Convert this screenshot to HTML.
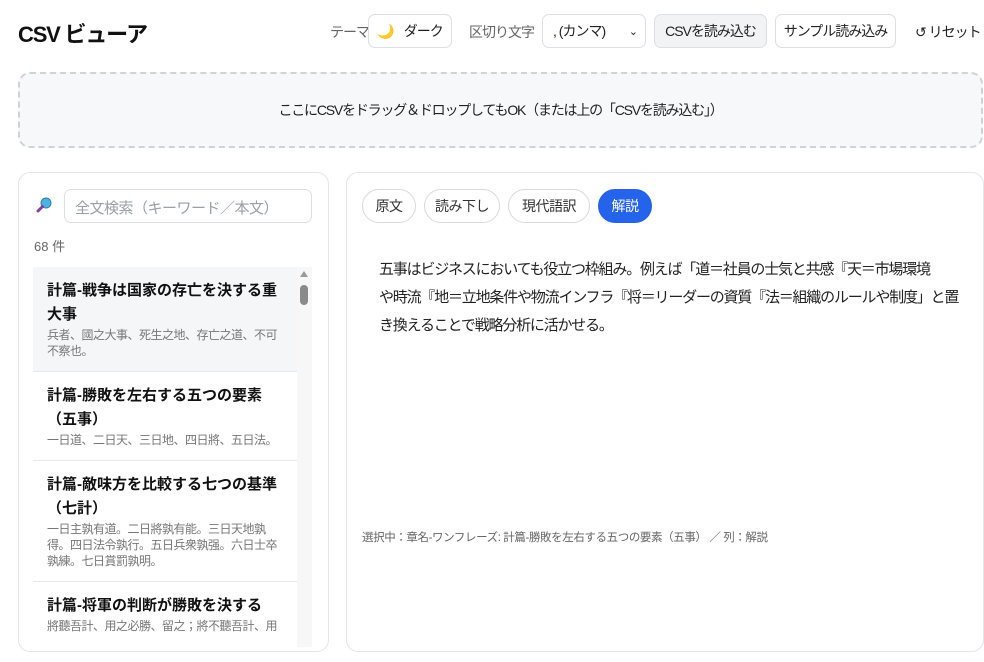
<!DOCTYPE html>
<html><head><meta charset="utf-8"><style>
*{box-sizing:border-box;margin:0;padding:0}
body{width:984px;height:637px;overflow:hidden;background:#fff;font-family:"Liberation Sans","Noto Sans CJK JP",sans-serif;color:#1f2328;position:relative}
.abs{position:absolute}
h1{position:absolute;left:18px;top:17px;font-size:22px;font-weight:700;color:#111;letter-spacing:-1.2px;white-space:nowrap}
.btn{position:absolute;top:14px;height:34px;border:1px solid #dcdfe4;border-radius:7px;background:#fff;font-size:14px;display:flex;align-items:center;justify-content:center;color:#222;letter-spacing:-1px;white-space:nowrap}
.lbl{position:absolute;top:22px;font-size:14px;color:#666;letter-spacing:-1px;white-space:nowrap}
.drop{left:18px;top:72px;width:965px;height:76px;border:2px dashed #cfd3d8;border-radius:12px;background:#f7f8fa;display:flex;align-items:center;justify-content:center;font-size:14px;color:#222;letter-spacing:-1.2px}
.panel{border:1px solid #e3e5e8;border-radius:12px;background:#fff}
.item{position:absolute;left:33px;width:264px;padding:12px 14px 10px;border-bottom:1px solid #e6e8eb}
.item b{display:block;font-size:15px;line-height:24px;color:#111}
.item span{display:block;width:236px;font-size:12px;line-height:16px;color:#777;letter-spacing:-0.5px}
.tab{position:absolute;top:189px;height:34px;border:1px solid #d6d9de;border-radius:17px;font-size:14px;display:flex;align-items:center;justify-content:center;color:#333;background:#fff;letter-spacing:-0.5px}
</style></head><body>
<h1>CSV ビューア</h1>
<div class="lbl" style="left:330px">テーマ</div>
<div class="btn" style="left:368px;width:84px"><span style="color:#e8a33c;margin-right:10px">🌙</span>ダーク</div>
<div class="lbl" style="left:469px">区切り文字</div>
<div class="btn" style="left:542px;width:104px;justify-content:space-between;padding:0 8px 0 10px">, (カンマ)<span style="font-size:11px">&#8964;</span></div>
<div class="btn" style="left:654px;width:113px;background:#f2f3f5">CSVを読み込む</div>
<div class="btn" style="left:775px;width:121px">サンプル読み込み</div>
<div class="lbl" style="left:915px;color:#222">↺ リセット</div>
<div class="abs drop">ここにCSVをドラッグ＆ドロップしてもOK（または上の「CSVを読み込む」）</div>

<div class="abs panel" style="left:18px;top:172px;width:311px;height:480px"></div>
<div class="abs" style="left:36px;top:197px;width:14px;height:14px"><svg width="16" height="16" viewBox="0 0 16 16"><circle cx="10" cy="6" r="5" fill="#4fb3e0" stroke="#2a7fb0"/><path d="M6.5 9.5L2 14" stroke="#8a3fa0" stroke-width="3" stroke-linecap="round"/></svg></div>
<div class="abs" style="left:64px;top:189px;width:248px;height:34px;border:1px solid #dcdfe4;border-radius:7px;padding:7px 10px;font-size:15px;color:#9aa0a6;letter-spacing:-0.5px">全文検索（キーワード／本文）</div>
<div class="abs" style="left:34px;top:236px;font-size:13px;color:#666">68 件</div>
<div class="item" style="top:267px;height:105px;background:#f5f6f8"><b>計篇-戦争は国家の存亡を決する重大事</b><span>兵者、國之大事、死生之地、存亡之道、不可不察也。</span></div>
<div class="item" style="top:372px;height:89px"><b>計篇-勝敗を左右する五つの要素（五事）</b><span>一日道、二日天、三日地、四日將、五日法。</span></div>
<div class="item" style="top:461px;height:121px"><b>計篇-敵味方を比較する七つの基準（七計）</b><span>一日主孰有道。二日將孰有能。三日天地孰得。四日法令孰行。五日兵衆孰强。六日士卒孰練。七日賞罰孰明。</span></div>
<div class="item" style="top:582px;height:80px;border:none"><b>計篇-将軍の判断が勝敗を決する</b><span>將聽吾計、用之必勝、留之；將不聽吾計、用</span></div>
<div class="abs" style="left:297px;top:267px;width:15px;height:380px;background:#f7f7f7"></div>
<div class="abs" style="left:300px;top:271px;width:0;height:0;border-left:4px solid transparent;border-right:4px solid transparent;border-bottom:6px solid #999"></div>
<div class="abs" style="left:300px;top:285px;width:8px;height:20px;border-radius:4px;background:#8a8a8a"></div>

<div class="abs panel" style="left:346px;top:172px;width:638px;height:480px"></div>
<div class="tab" style="left:362px;width:54px">原文</div>
<div class="tab" style="left:424px;width:76px">読み下し</div>
<div class="tab" style="left:508px;width:82px">現代語訳</div>
<div class="tab" style="left:598px;width:54px;background:#2563eb;border-color:#2563eb;color:#fff">解説</div>
<div class="abs" style="left:379px;top:256px;width:600px;font-size:15px;line-height:28px;color:#222;letter-spacing:-1.2px;white-space:nowrap">五事はビジネスにおいても役立つ枠組み。例えば「道＝社員の士気と共感『天＝市場環境<br>や時流『地＝立地条件や物流インフラ『将＝リーダーの資質『法＝組織のルールや制度」と置<br>き換えることで戦略分析に活かせる。</div>
<div class="abs" style="left:362px;top:529px;font-size:11.5px;color:#666;letter-spacing:-0.4px">選択中：章名-ワンフレーズ: 計篇-勝敗を左右する五つの要素（五事） ／ 列：解説</div>
</body></html>
